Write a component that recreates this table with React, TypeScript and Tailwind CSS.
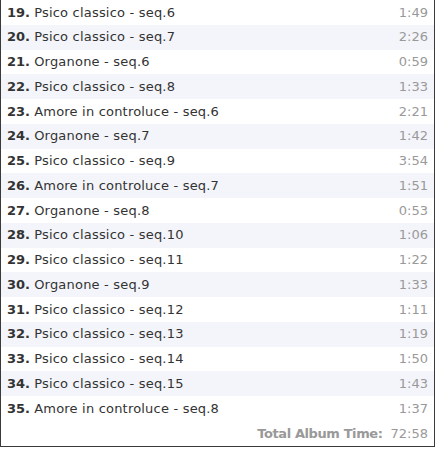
import React from "react";

const tracks: [string, string, string][] = [
  ["19.", "Psico classico - seq.6", "1:49"],
  ["20.", "Psico classico - seq.7", "2:26"],
  ["21.", "Organone - seq.6", "0:59"],
  ["22.", "Psico classico - seq.8", "1:33"],
  ["23.", "Amore in controluce - seq.6", "2:21"],
  ["24.", "Organone - seq.7", "1:42"],
  ["25.", "Psico classico - seq.9", "3:54"],
  ["26.", "Amore in controluce - seq.7", "1:51"],
  ["27.", "Organone - seq.8", "0:53"],
  ["28.", "Psico classico - seq.10", "1:06"],
  ["29.", "Psico classico - seq.11", "1:22"],
  ["30.", "Organone - seq.9", "1:33"],
  ["31.", "Psico classico - seq.12", "1:11"],
  ["32.", "Psico classico - seq.13", "1:19"],
  ["33.", "Psico classico - seq.14", "1:50"],
  ["34.", "Psico classico - seq.15", "1:43"],
  ["35.", "Amore in controluce - seq.8", "1:37"],
];

export default function App() {
  return (
    <div className="w-[436px] h-[449px] bg-white" style={{ fontFamily: '"DejaVu Sans", sans-serif' }}>
      <div className="w-[435px] border-l border-r border-b border-[#3a3a3a] flex flex-col">
        {tracks.map(([n, t, d], i) => (
          <div
            key={n}
            className={`flex items-center justify-between h-[24.75px] pl-[6px] pr-[6px] text-[13px] ${i % 2 === 1 ? "bg-[#f4f5fa]" : "bg-white"}`}
          >
            <span className="text-[#333333]">
              <span className="font-bold">{n}</span> <span className="tracking-[0.2px]">{t}</span>
            </span>
            <span className="text-[#999999]">{d}</span>
          </div>
        ))}
        <div className="flex items-center justify-end h-[25px] pr-[6px] text-[13px] text-[#999999]">
          <span className="font-bold tracking-[-0.4px]">Total Album Time:</span>
          <span className="ml-[8px]">72:58</span>
        </div>
      </div>
    </div>
  );
}
